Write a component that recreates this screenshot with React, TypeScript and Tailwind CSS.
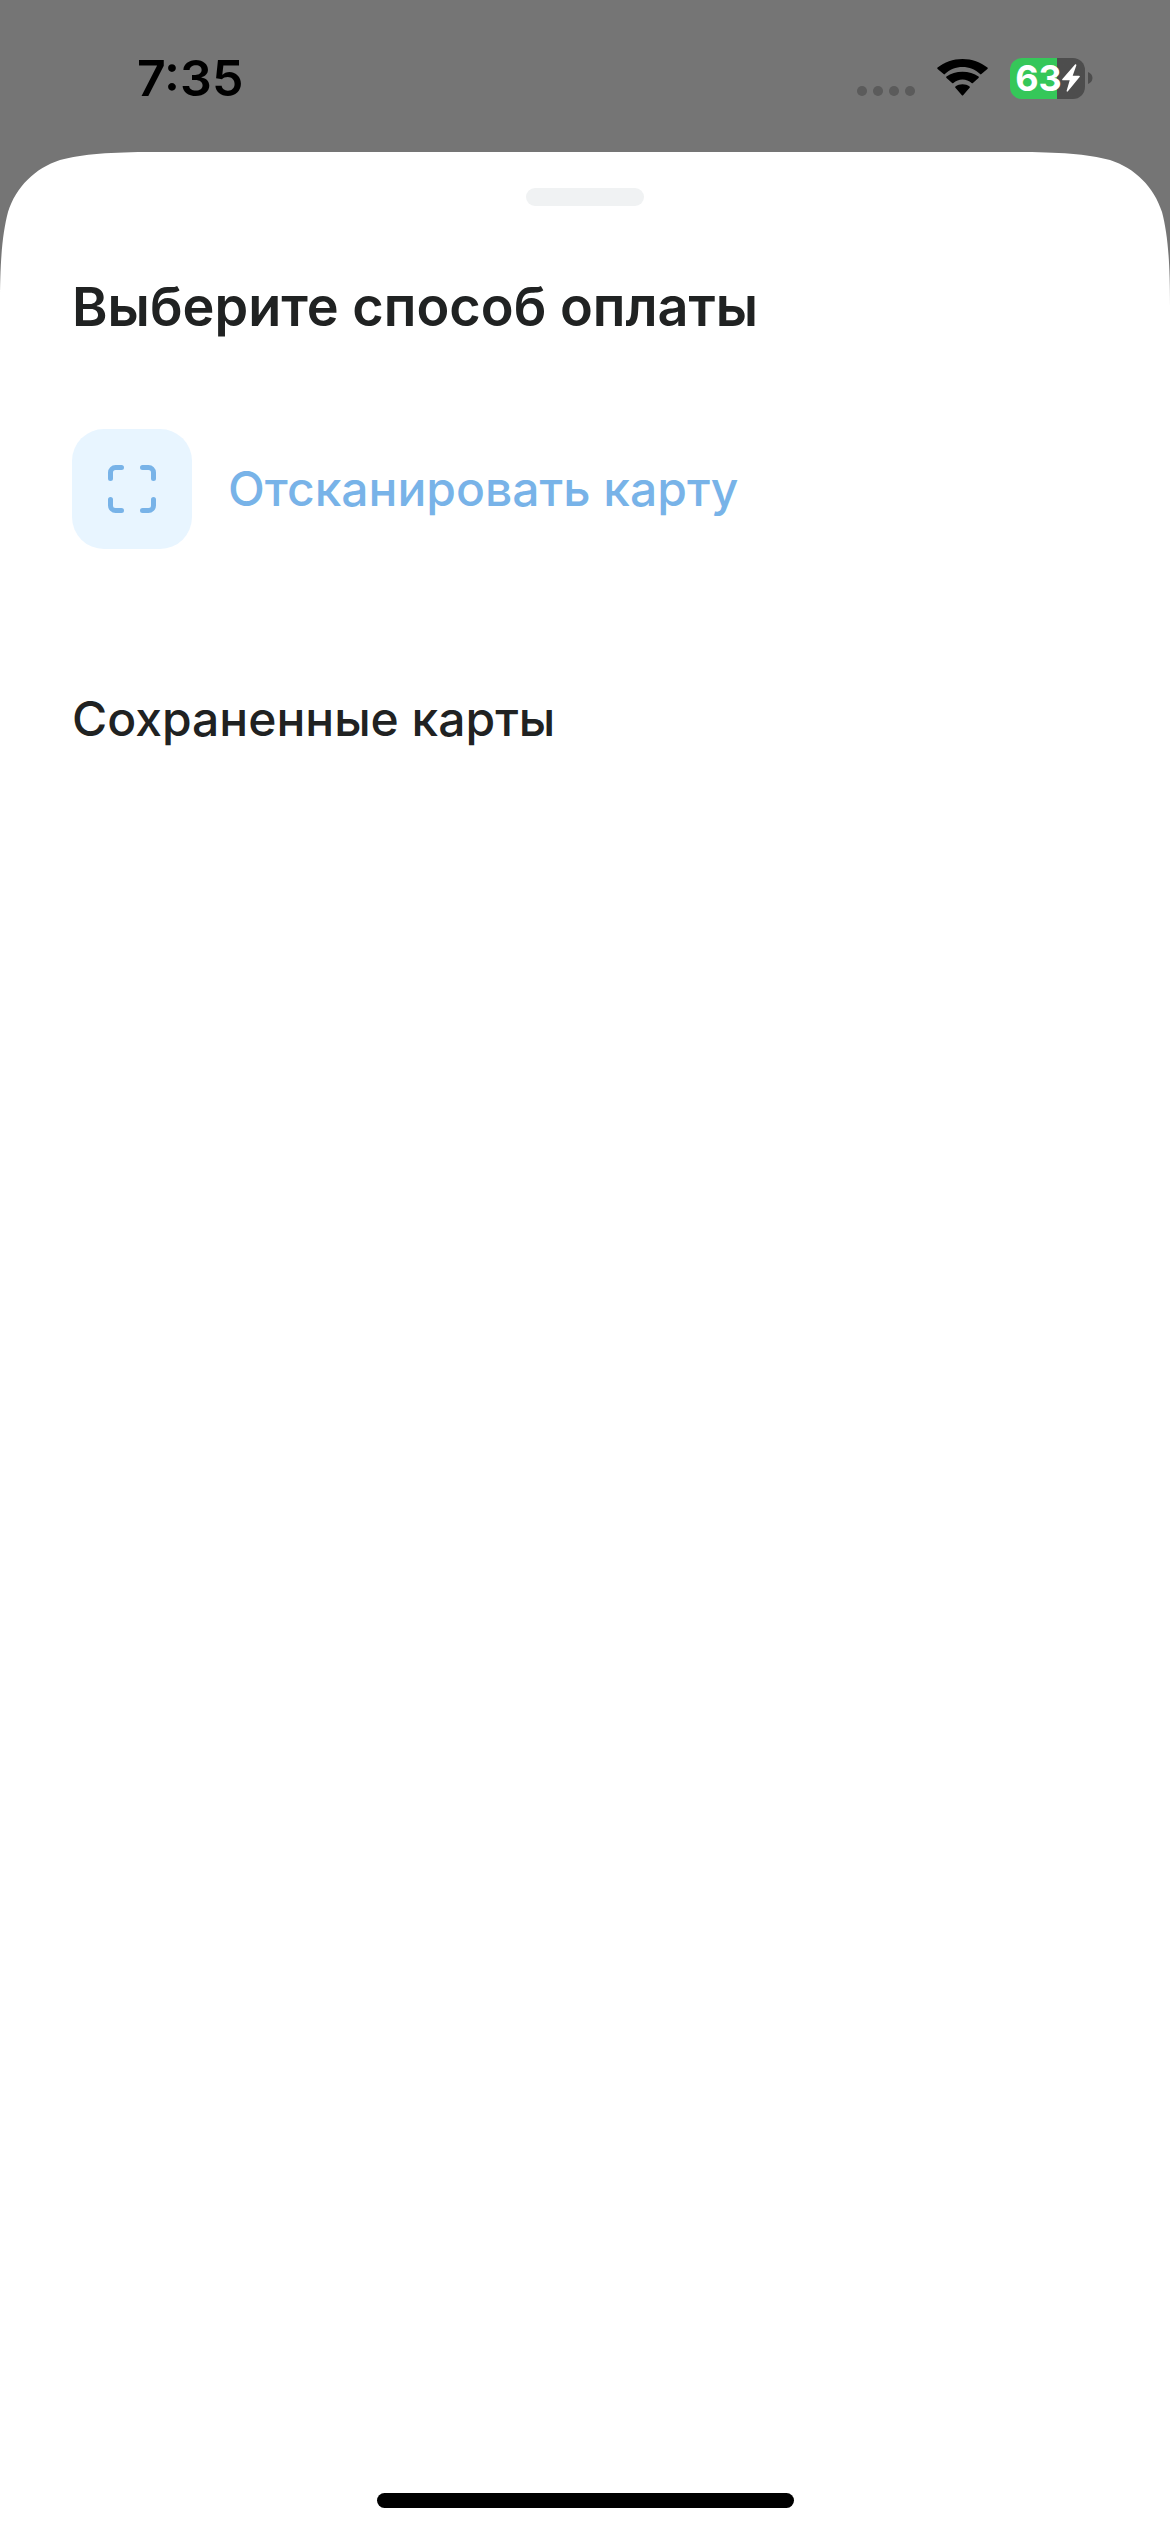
function SignalDots() {
  return (
    <div className="flex gap-[6px] pt-[26px]">
      <span className="size-[10px] rounded-full bg-[#5b5b5b]" />
      <span className="size-[10px] rounded-full bg-[#5b5b5b]" />
      <span className="size-[10px] rounded-full bg-[#5b5b5b]" />
      <span className="size-[10px] rounded-full bg-[#5b5b5b]" />
    </div>
  );
}

function WifiIcon() {
  return (
    <svg width="51" height="38" viewBox="0 0 51 38" fill="black" aria-hidden="true">
      <path d="M25.500 8c6.600 0 12.900 2.500 17.600 7.100.4.400.9.400 1.300 0l6-5.100c.5-.4.5-1 0-1.400C43.700 3.100 34.900 0 25.500 0S7.300 3.100.6 8.600c-.5.400-.5 1 0 1.400l6 5.100c.4.400.9.400 1.300 0C12.600 10.500 18.900 8 25.500 8z" />
      <path d="M25.500 20.500c3.400 0 6.600 1.200 9.100 3.500.4.400.9.400 1.300 0l5.600-5c.5-.4.500-1 0-1.400C37.300 14.400 31.500 12.800 25.500 12.800S13.700 14.400 9.500 17.600c-.5.400-.5 1 0 1.400l5.600 5c.4.400.9.400 1.300 0 2.500-2.300 5.700-3.500 9.100-3.500z" />
      <path d="M32.600 28.800c.4-.4.4-.9 0-1.300-2-1.500-4.500-2.300-7.100-2.300s-5.100.8-7.100 2.300c-.4.400-.4.900 0 1.300l6.500 7.400c.3.400.9.400 1.200 0z" />
    </svg>
  );
}

function Battery() {
  return (
    <div className="flex items-center gap-[3px]">
      <div className="flex h-[41px] w-[75px] items-center justify-center rounded-[12px] bg-linear-to-r from-[#35c759] from-63% to-[#4d4d4d] to-63% text-white">
        <span className="text-[36px] leading-none font-bold">63</span>
        <svg width="18" height="28" viewBox="0 0 18 28" fill="currentColor" aria-hidden="true">
          <path d="M13 .6 0.400 15.100c-.5.600-.2 1.200.5 1.200h6.800L4.700 26.600c-.3 1 .5 1.400 1.200.7L17.600 13c.5-.6.2-1.300-.5-1.300h-6.400L14.300 1.400c.3-1-.6-1.600-1.300-.8z" />
        </svg>
      </div>
      <svg width="5" height="12" viewBox="0 0 5 12" fill="#4d4d4d" aria-hidden="true">
        <path d="M0 0c2.500 1 4.500 3.300 4.500 6S2.500 11 0 12z" />
      </svg>
    </div>
  );
}

function StatusBar() {
  return (
    <header className="flex h-[152px] justify-between pt-[48px] pr-[77px] pl-[137px]">
      <time className="text-[50px] leading-[60px] font-semibold">7:35</time>
      <div className="flex h-[60px] items-center">
        <SignalDots />
        <div className="ml-[22px]">
          <WifiIcon />
        </div>
        <div className="ml-[22px]">
          <Battery />
        </div>
      </div>
    </header>
  );
}

function SheetCorner({ className }: { className: string }) {
  return (
    <svg
      className={className}
      width="153"
      height="153"
      viewBox="0 0 153 153"
      fill="#757575"
      aria-hidden="true"
    >
      <path d="M0 0H153C111 0 83 2 60 8C35 16 16 35 8 60C2 83 0 111 0 153Z" />
    </svg>
  );
}

function ScanIcon() {
  return (
    <svg
      width="48"
      height="48"
      viewBox="0 0 48 48"
      fill="none"
      stroke="currentColor"
      strokeWidth="5"
      strokeLinecap="round"
      strokeLinejoin="round"
      aria-hidden="true"
    >
      <path d="M2.500 13.500V7.500a5 5 0 0 1 5-5H13.500" />
      <path d="M34.500 2.500h6a5 5 0 0 1 5 5v6" />
      <path d="M45.500 34.500v6a5 5 0 0 1-5 5h-6" />
      <path d="M13.500 45.500H7.500a5 5 0 0 1-5-5V34.500" />
    </svg>
  );
}

export default function App() {
  return (
    <div className="flex min-h-screen flex-col bg-[#757575] font-[Inter,sans-serif] text-black">
      <StatusBar />

      <main className="relative flex flex-1 flex-col bg-white px-[72px] pt-[36px] pb-[24px] text-[#202222]">
        <SheetCorner className="absolute top-0 left-0" />
        <SheetCorner className="absolute top-0 right-0 -scale-x-100" />

        <div className="h-[18px] w-[118px] self-center rounded-full bg-[#f0f2f3]" />

        <h1 className="mt-[69px] text-[54px] leading-[64px] font-semibold">
          Выберите способ оплаты
        </h1>

        <button
          type="button"
          className="mt-[90px] flex items-center gap-[36px] self-start text-[48px] leading-[60px] font-medium text-[#78b3e8]"
        >
          <span className="flex size-[120px] items-center justify-center rounded-[32px] bg-[#e8f5ff]">
            <ScanIcon />
          </span>
          Отсканировать карту
        </button>

        <h2 className="mt-[140px] text-[48px] leading-[60px] font-medium">Сохраненные карты</h2>

        <div className="mt-auto h-[15px] w-[417px] self-center rounded-full bg-black" />
      </main>
    </div>
  );
}
